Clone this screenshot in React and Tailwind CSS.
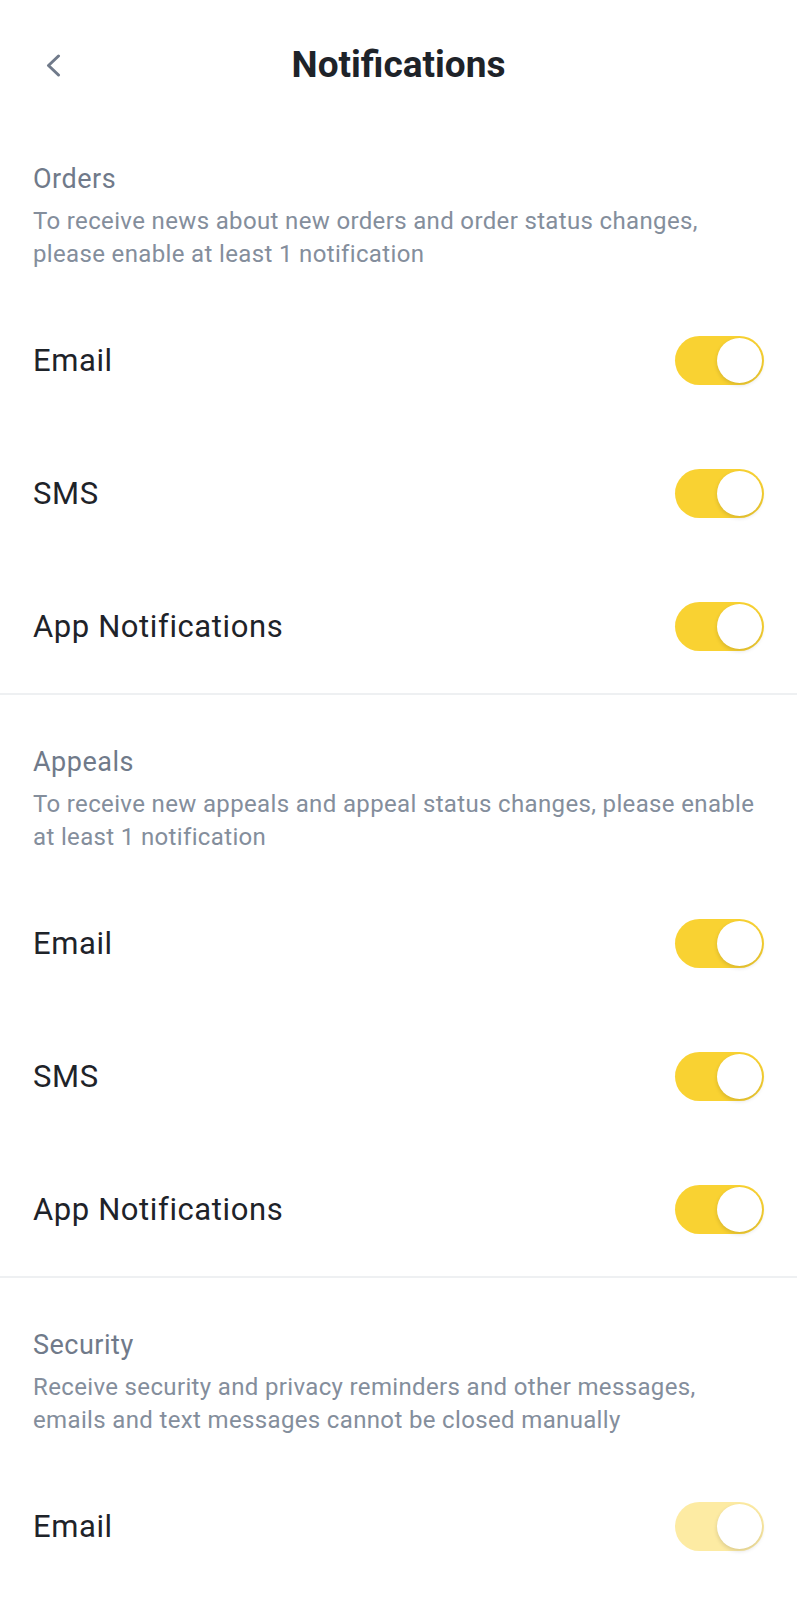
import { useState } from 'react';

const sections = [
  {
    title: 'Orders',
    desc: 'To receive news about new orders and order status changes, please enable at least 1 notification',
    items: [
      { key: 'email', label: 'Email' },
      { key: 'sms', label: 'SMS' },
      { key: 'app', label: 'App Notifications' },
    ],
  },
  {
    title: 'Appeals',
    desc: 'To receive new appeals and appeal status changes, please enable at least 1 notification',
    items: [
      { key: 'email', label: 'Email' },
      { key: 'sms', label: 'SMS' },
      { key: 'app', label: 'App Notifications' },
    ],
  },
  {
    title: 'Security',
    desc: 'Receive security and privacy reminders and other messages, emails and text messages cannot be closed manually',
    items: [{ key: 'email', label: 'Email', locked: true }],
  },
];

function Toggle({ on, locked, onChange }) {
  return (
    <button
      type="button"
      disabled={locked}
      onClick={onChange}
      className={`flex h-[49px] w-[89px] items-center rounded-full p-[2px] ${
        on ? 'justify-end' : 'justify-start'
      } ${locked ? 'bg-[#fdeba3]' : on ? 'bg-[#f9d232]' : 'bg-[#e6e8ea]'}`}
    >
      <span className="h-[45px] w-[45px] rounded-full bg-white shadow-[0_2px_4px_rgba(0,0,0,0.14)]" />
    </button>
  );
}

function Section({ section, index, values, onToggle }) {
  return (
    <div className={index === 0 ? 'pt-[33px]' : 'pt-[51px]'}>
      <div className="px-[33px]">
        <h2 className="text-[27px] leading-[32px] tracking-[0.5px] text-[#707a8a]">{section.title}</h2>
        <p className="mt-[10px] mb-[23px] text-[24px] leading-[33px] tracking-[0.35px] text-[#848e9c]">{section.desc}</p>
      </div>
      {section.items.map((item) => {
        const id = `${section.title}-${item.key}`;
        return (
          <div key={id} className="flex h-[133px] items-center justify-between px-[33px]">
            <span className="text-[31px] leading-none tracking-[0.6px] text-[#1e2329]">{item.label}</span>
            <Toggle on={item.locked ? true : values[id] !== false} locked={item.locked} onChange={() => onToggle(id)} />
          </div>
        );
      })}
    </div>
  );
}

export default function App() {
  const [values, setValues] = useState({});

  const toggle = (id) => {
    setValues((prev) => ({ ...prev, [id]: prev[id] === false }));
  };

  return (
    <div className="min-h-[1600px] w-full bg-white font-['Roboto',sans-serif]">
      {/* header */}
      <div className="relative flex h-[130px] items-center justify-center">
        <button type="button" className="absolute left-[43px] top-[52px] p-[2px]">
          <svg width="16" height="23" viewBox="0 0 16 23" fill="none">
            <path d="M13.5 2 L3.5 11.5 L13.5 21" stroke="#707a8a" strokeWidth="3" strokeLinecap="round" strokeLinejoin="round" />
          </svg>
        </button>
        <h1 className="text-[37px] font-bold text-[#1e2329]">Notifications</h1>
      </div>

      {sections.map((section, i) => (
        <div key={section.title}>
          {i > 0 && <div className="h-[2px] bg-[#eef0f2]" />}
          <Section section={section} index={i} values={values} onToggle={toggle} />
        </div>
      ))}
    </div>
  );
}
